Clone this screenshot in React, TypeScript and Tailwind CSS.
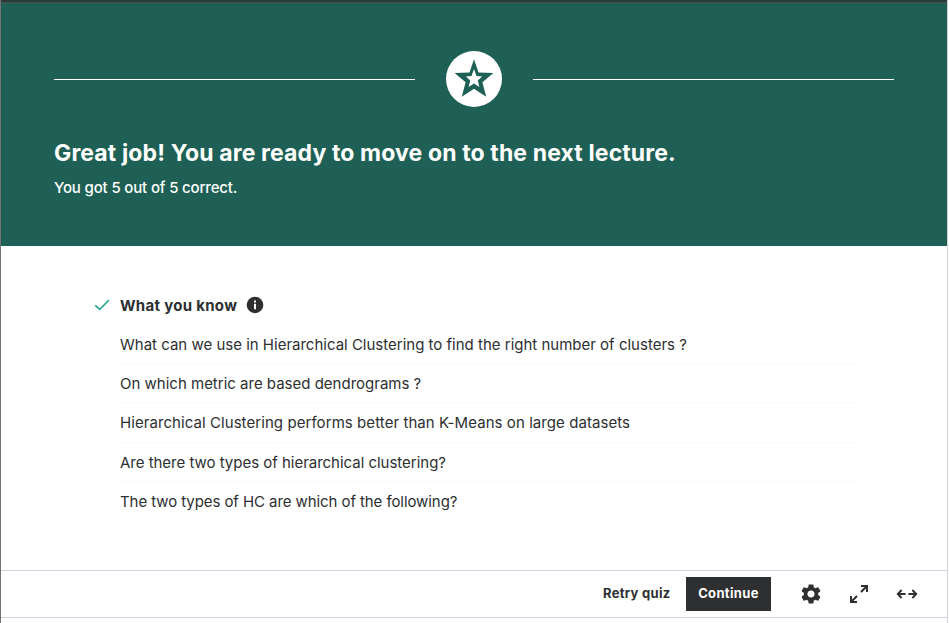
import { MdSettings } from "react-icons/md";

const questions = [
  { text: "What can we use in Hierarchical Clustering to find the right number of clusters ?", tracking: "tracking-[0px]" },
  { text: "On which metric are based dendrograms ?", tracking: "tracking-[0px]" },
  { text: "Hierarchical Clustering performs better than K-Means on large datasets", tracking: "tracking-[0.07px]" },
  { text: "Are there two types of hierarchical clustering?", tracking: "tracking-[-0.02px]" },
  { text: "The two types of HC are which of the following?", tracking: "tracking-[-0.08px]" },
];

function StarBadge() {
  return (
    <div className="flex h-14 w-14 items-center justify-center rounded-full bg-white">
      <svg width="56" height="56" viewBox="0 0 56 56">
        <path
          fill="#1e6055"
          fillRule="evenodd"
          d="M28 8.3 32.5 21.4 47.4 22 36.4 31.3 40.2 45.8 28 37.8 15.8 45.8 19.6 31.3 8.6 22 23.5 21.4ZM28 18 25.5 25 19.8 25.5 24.2 29.6 22.6 36 28 32.4 33.4 36 31.8 29.6 36.2 25.5 30.5 25Z"
        />
      </svg>
    </div>
  );
}

function ResultBanner() {
  return (
    <header className="h-[243px] bg-[#1e6055] px-[53px] pt-12 text-white">
      <div className="flex items-center justify-between">
        <div className="h-px w-[361px] bg-white" />
        <StarBadge />
        <div className="h-px w-[361px] bg-white" />
      </div>
      <h1 className="mt-[30px] whitespace-nowrap text-[23px] font-bold leading-8 tracking-[0.125px]">
        Great job! You are ready to move on to the next lecture.
      </h1>
      <p className="mt-2 whitespace-nowrap text-[15px] font-medium leading-[22px] tracking-[-0.16px]">
        You got 5 out of 5 correct.
      </p>
    </header>
  );
}

function KnownTopics() {
  return (
    <section className="h-[324px] pl-[93px] pr-[92px] pt-12">
      <div className="flex h-[22px] items-center">
        <svg width="16" height="16" viewBox="0 0 16 16" className="mr-2.5" fill="none">
          <path d="M1.3 8.3 5.7 12.5 15 3" stroke="#19a38c" strokeWidth="1.6" />
        </svg>
        <h2 className="mt-0.5 w-[117px] whitespace-nowrap text-[15px] font-bold leading-[22px] tracking-[0.3px]">
          What you know
        </h2>
        <svg width="18" height="18" viewBox="0 0 18 18" className="ml-[9px]">
          <circle cx="9" cy="9" r="8.3" fill="#2d2f31" />
          <path d="M8 4.4h2v2H8zM8 7.8h2v5.4H8z" fill="white" />
        </svg>
      </div>
      <ul className="ml-[26px] mt-[9px]">
        {questions.map((q) => (
          <li key={q.text} className="h-[39.2px] border-b border-[#f7f9fa] last:border-b-0">
            <p className={`whitespace-nowrap text-[15px] leading-10 ${q.tracking}`}>{q.text}</p>
          </li>
        ))}
      </ul>
    </section>
  );
}

function ExpandIcon() {
  return (
    <svg width="20" height="20" viewBox="0 0 20 20" fill="none" stroke="#2d2f31" strokeWidth="2">
      <path d="M12 2h6v6M17.5 2.5 12 8M2 12v6h6M2.5 17.5 8 12" />
    </svg>
  );
}

function WidenIcon() {
  return (
    <svg width="22" height="12" viewBox="0 0 22 12" fill="none" stroke="#2d2f31" strokeWidth="1.9">
      <path d="M5.6 2 1.8 6l3.8 4M2 6h7.6M16.4 2l3.8 4-3.8 4M20 6h-7.6" />
    </svg>
  );
}

function Toolbar() {
  return (
    <footer className="flex h-12 items-center border-y border-[#d1d2e0] text-[13px] font-bold">
      <button className="ml-[602px] w-[67px] whitespace-nowrap text-left tracking-[0.3px]">Retry quiz</button>
      <button className="ml-4 h-[34px] w-[85px] bg-[#2d2f31] text-center tracking-[0.35px] text-white">Continue</button>
      <button className="ml-[28px]"><MdSettings size={24} color="#2d2f31" /></button>
      <button className="ml-[26px]"><ExpandIcon /></button>
      <button className="ml-[27px]"><WidenIcon /></button>
    </footer>
  );
}

export default function App() {
  return (
    <div className="flex h-[623px] w-[949px] overflow-hidden bg-white font-['Inter','Liberation_Sans',sans-serif] text-[#2d2f31]">
      <div className="w-px bg-[#737373]" />
      <main className="w-[946px]">
        <div className="h-[3px] border-b border-[#4a4f4e] bg-[#283d3a]" />
        <ResultBanner />
        <KnownTopics />
        <Toolbar />
      </main>
      <div className="w-px bg-[#d1d2e0]" />
    </div>
  );
}
